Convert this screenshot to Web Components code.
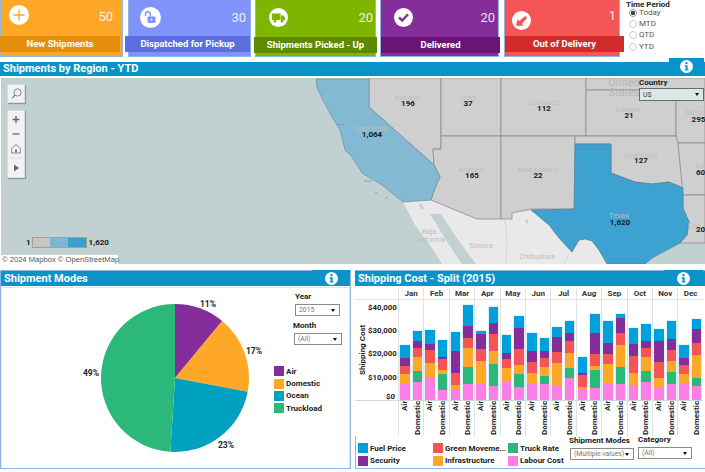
<!DOCTYPE html>
<html>
<head>
<meta charset="utf-8">
<title>Shipments dashboard</title>
<style>
  html, body { margin: 0; padding: 0; background: #fff; overflow: hidden; }
</style>
</head>
<body>
<app-root></app-root>
<script>
const FONT = 'Roboto, "Open Sans", "DejaVu Sans", sans-serif';

const ICONS = {
    plus: `<svg width="20" height="20" viewBox="0 0 20 20"><circle cx="10" cy="10" r="10" fill="#fff"/><path d="M10 4.5v11M4.5 10h11" stroke="#ffa726" stroke-width="1.4" fill="none"/></svg>`,
    unlock: `<svg width="21" height="21" viewBox="0 0 21 21"><circle cx="10.5" cy="10.5" r="10.5" fill="#fff"/><rect x="7.5" y="9.5" width="8" height="6.5" rx="1" fill="#7f93fb"/><path d="M5.5 9V7.2a2.4 2.4 0 0 1 4.8 0V9.5" stroke="#7f93fb" stroke-width="1.5" fill="none"/><rect x="10.8" y="11.8" width="1.5" height="1.8" fill="#fff"/></svg>`,
    truck: `<svg width="19" height="19" viewBox="0 0 19 19"><circle cx="9.5" cy="9.5" r="9.5" fill="#fff"/><rect x="3" y="5.5" width="8.5" height="6.5" fill="#7db500"/><path d="M12 7.5h2.2L16 9.6V12h-4z" fill="#7db500"/><circle cx="6" cy="13" r="1.5" fill="#7db500"/><circle cx="13" cy="13" r="1.5" fill="#7db500"/></svg>`,
    check: `<svg width="19" height="19" viewBox="0 0 19 19"><circle cx="9.5" cy="9.5" r="9.5" fill="#fff"/><path d="M5 9.5l3.2 3L14 6.3" stroke="#862d9c" stroke-width="2.4" fill="none"/></svg>`,
    out: `<svg width="19" height="19" viewBox="0 0 19 19"><circle cx="9.5" cy="9.5" r="9.5" fill="#fff"/><path d="M4.2 14.8l1-6.6 1.900 1.900 6.300-5.200 1.800 1.800-5.300 6.300 1.900 1.800z" fill="#f55555"/></svg>`
};

// ---- small pieces ----

class KpiCard extends HTMLElement {
    connectedCallback(){
        if(this.shadowRoot) return;
        const icon = ICONS[this.getAttribute('icon')];
        this.attachShadow({mode: 'open'}).innerHTML = `
<style>
  :host {
    display: block;
    box-sizing: border-box;
    height: 57px;
    background: var(--fill);
    border: 1px solid #8fb5e0;
    border-top: 0;
    font-family: ${FONT};
    color: #fff;
  }
  #top { display: flex; justify-content: space-between; height: var(--top, 36px); }
  #icon { margin: var(--icon-y) 0 0 var(--icon-x); line-height: 0; }
  #value { margin: var(--val-y) var(--val-x) 0 0; font-size: 13px; line-height: 16px; color: rgba(255,255,255,.88); }
  #banner {
    height: 16px;
    margin: 0 var(--ban-r) 0 var(--ban-l);
    background: var(--band);
    font-size: 9.5px;
    font-weight: 700;
    line-height: 16px;
    text-align: center;
    white-space: nowrap;
  }
</style>
<div id="top"><div id="icon">${icon}</div><div id="value">${this.getAttribute('value')}</div></div>
<div id="banner"><slot></slot></div>`;
    }
}
customElements.define('kpi-card', KpiCard);

class TimeFilter extends HTMLElement {
    connectedCallback(){
        if(this.shadowRoot) return;
        const items = ['Today', 'MTD', 'QTD', 'YTD'].map((t, i) => `
<div class="row"><span class="dot ${i === 0 ? 'on' : ''}"></span>${t}</div>`).join('');
        this.attachShadow({mode: 'open'}).innerHTML = `
<style>
  :host { display: block; margin-left: 6px; font-family: ${FONT}; font-size: 8px; color: #555; }
  #title { font-weight: 700; color: #222; line-height: 9px; height: 7px; white-space: nowrap; }
  .row { display: flex; align-items: center; height: 11.4px; padding-left: 3px; line-height: 10px; }
  .dot { box-sizing: border-box; width: 8px; height: 8px; margin-right: 2px; border: 1px solid #ccc; border-radius: 50%; background: #fff; }
  .dot.on { border-color: #999; background: radial-gradient(circle, #444 0 2px, #fff 2.4px); }
</style>
<div id="title">Time Period</div>${items}`;
    }
}
customElements.define('time-filter', TimeFilter);

class PanelHeader extends HTMLElement {
    connectedCallback(){
        if(this.shadowRoot) return;
        this.attachShadow({mode: 'open'}).innerHTML = `
<style>
  :host {
    display: block;
    position: relative;
    height: var(--head-h, 14px);
    background: #0a93c9;
    color: #fff;
    font-family: ${FONT};
    font-size: 11px;
    font-weight: 700;
    line-height: var(--head-h, 14px);
    padding-left: 3px;
    white-space: nowrap;
  }
  #tab {
    position: absolute;
    top: var(--tab-top, -4px);
    right: var(--tab-right, 1px);
    bottom: 0;
    width: var(--tab-w, 35px);
    background: #0a93c9;
    display: flex;
    align-items: flex-end;
    justify-content: center;
    padding-bottom: var(--tab-pad, 1px);
    box-sizing: border-box;
  }
</style>
<slot></slot>
<div id="tab"><svg width="13" height="13" viewBox="0 0 13 13"><circle cx="6.5" cy="6.5" r="6.5" fill="#fff"/><rect x="5.4" y="2.2" width="2.2" height="2" fill="#0a93c9"/><path d="M4.600 5.300h3v4.100h1v1.100H4.600V9.400h1V6.400h-1z" fill="#0a93c9"/></svg></div>`;
    }
}
customElements.define('panel-header', PanelHeader);

class FilterSelect extends HTMLElement {
    connectedCallback(){
        if(this.shadowRoot) return;
        this.attachShadow({mode: 'open'}).innerHTML = `
<style>
  :host { display: block; font-family: ${FONT}; }
  #label { font-size: 8px; font-weight: 700; color: #222; line-height: 10px; height: 10px; margin-left: var(--label-x, 0); white-space: nowrap; }
  #box {
    box-sizing: border-box;
    display: flex;
    align-items: center;
    justify-content: space-between;
    width: var(--w, 45px);
    height: var(--h, 12px);
    margin-top: var(--gap, 2px);
    margin-left: var(--box-x, 0);
    padding: 0 4px 0 3px;
    border: 1px solid var(--edge, #8a8a8a);
    background: var(--bg, #fff);
    color: var(--text, #777);
    font-size: 6.8px;
    white-space: nowrap;
  }
  #arrow { width: 0; height: 0; border: 2.5px solid transparent; border-top: 3px solid #111; border-bottom: 0; }
</style>
<div id="label">${this.getAttribute('label')}</div>
<div id="box"><span>${this.getAttribute('value')}</span><span id="arrow"></span></div>`;
    }
}
customElements.define('filter-select', FilterSelect);

class ColorKey extends HTMLElement {
    connectedCallback(){
        if(this.shadowRoot) return;
        this.attachShadow({mode: 'open'}).innerHTML = `
<style>
  :host { display: flex; align-items: center; font-family: ${FONT}; font-size: 8px; font-weight: 700; color: #222; white-space: nowrap; height: var(--row, 12.5px); }
  i { width: 10px; height: 10px; margin-right: 2px; background: ${this.getAttribute('color')}; flex: none; }
</style>
<i></i><slot></slot>`;
    }
}
customElements.define('color-key', ColorKey);

// ---- map ----

const STATE_PATHS = [
    // nevada, utah, colorado, top band, kansas
    'M369 78H441V149H433L434 165L369 107Z',
    'M441 78H501V136H441Z',
    'M501 78H586V136H501Z',
    'M586 78H705V90H586Z',
    'M586 90H676V136H586Z',
    'M676 90H705V143H676Z',
    // arizona, new mexico
    'M441 136H501V219H477L431 200L435 188L440 177L434 165L433 149H441Z',
    'M501 136H575V209H531L512 213V219H501Z',
    // oklahoma, arkansas, louisiana
    'M575 136H676L678 143L683 188L669 182L652 184L635 182L619 176L611 173V144H575Z',
    'M678 143H705V195H683Z',
    'M683 195H705V243L680 243L687 235L689 222L683 208Z'
];
const CALIFORNIA = 'M316 79H369V107L434 165L440 177L435 188L431 200L403 202L382 185L362 173L352 157L345 150L340 130L332 117L323 100L317 88Z';
const TEXAS = 'M575 144H611V173L619 176L635 182L652 184L669 182L683 188V208L689 222L687 235L680 243L652 258L645 264H607L599 250L592 241L585 239L579 240L572 252L559 238L549 225L531 210L574 209Z';
const MEXICO = 'M403 202L431 200L477 219H512V213L531 210L549 225L559 238L572 252L579 240L585 239L592 241L599 250L607 264H442L432 248L415 225Z';
const GULF = 'M430 214L441 214L458 240L476 264H462L446 240Z';

// the right edge of the map cuts these three names in the reference
const PALE = [
    ['Nevada',407,100], ['Utah',468,100], ['Colorado',544,105], ['Kansas',628,112], ['California',371,131],
    ['Arizona',471,172], ['New Mexico',538,172], ['Oklahoma',640,158], ['Misso',696,115], ['Ark',700,169],
    ['Texas',619,218], ['Lou',694,228], ['Baja',429,234], ['California',429,242], ['Sonora',481,248], ['Chihuahua',537,259]
];
const COUNTS = [
    ['196',408,106], ['37',468,106], ['112',544,111], ['21',629,118], ['1,064',372,137], ['165',472,178],
    ['22',538,178], ['127',641,163], ['295',698.500,122], ['60',700.500,175], ['20',700.500,232], ['1,620',620,225]
];

class RegionMap extends HTMLElement {
    connectedCallback(){
        if(this.shadowRoot) return;
        const pale = PALE.map(p => `<text x="${p[1]}" y="${p[2]}" class="pale">${p[0]}</text>`).join('');
        const counts = COUNTS.map(p => `<text x="${p[1]}" y="${p[2]}" class="count">${p[0]}</text>`).join('');
        this.attachShadow({mode: 'open'}).innerHTML = `
<style>
  :host { display: block; position: relative; height: 186px; margin-left: 1px; overflow: hidden; background: #c1d1d1; font-family: ${FONT}; }
  svg#map { display: block; position: absolute; left: -1px; top: 0; }
  .pale { font-size: 7.5px; fill: #bcbfbf; text-anchor: middle; }
  .count { font-size: 8px; font-weight: 700; fill: #1a1a1a; text-anchor: middle; }
  .big { font-size: 11px; fill: #b4b8b8; text-anchor: middle; }
  .tool {
    position: absolute;
    left: 6px;
    box-sizing: border-box;
    width: 18px;
    background: #f1f3f2;
    border: 1px solid #d9dcdb;
    box-shadow: 1px 1px 1px rgba(0,0,0,.25);
    display: flex;
    flex-direction: column;
    align-items: center;
  }
  #search { top: 6px; height: 19px; justify-content: center; }
  #zoom { top: 32px; height: 68px; }
  #zoom svg { display: block; }
  #scale { position: absolute; left: 25px; top: 159px; display: flex; align-items: center; font-size: 8px; font-weight: 700; color: #1a1a1a; }
  #ramp { display: flex; box-sizing: border-box; width: 55px; height: 11px; margin: 0 2px 0 1px; border: 1px solid #a89f8f; }
  #ramp i { flex: 1; }
  #credit { position: absolute; left: 0; bottom: 0; width: 117px; height: 9px; background: #fff; font-family: "Liberation Sans", sans-serif; font-size: 7.600px; line-height: 9px; color: #555; padding-left: 1px; white-space: nowrap; box-sizing: border-box; }
  #country { position: absolute; right: 1px; top: 0; --w: 65px; --h: 13px; --gap: 0px; --edge: #5f6f70; --bg: #dce6e6; --text: #333; }
</style>
<svg id="map" width="705" height="186" viewBox="0 78 705 186">
  <path d="${MEXICO}" fill="#e9e9e9"/>
  <path d="${GULF}" fill="#c1d1d1"/>
  <path d="M505 220L507 240L506 264M569 253L564 264" fill="none" stroke="#bbb" stroke-width=".7" stroke-dasharray="1.500 1"/>
  <path d="M420 204l3 5M526 220l2 3" stroke="#c1d1d1" stroke-width="2.500" fill="none"/>
  ${STATE_PATHS.map(d => `<path d="${d}" fill="#cfcfcf" stroke="#8e8e8e" stroke-width=".8"/>`).join('')}
  <path d="${CALIFORNIA}" fill="#83b9d2" stroke="#6f8f9f" stroke-width=".7"/>
  <path d="${TEXAS}" fill="#3da2d1" stroke="#5a7f92" stroke-width=".7"/>
  <path d="M364 181h8M375 192l2 1M386 197l1 2M338 124l6 1" stroke="#7d9298" stroke-width=".8" fill="none"/>
  ${pale}
  <text x="624" y="86" class="big">United</text>
  <text x="624" y="96" class="big">States</text>
  ${counts}
</svg>
<div class="tool" id="search"><svg width="13" height="13" viewBox="0 0 13 13"><circle cx="7.500" cy="5.500" r="3.600" fill="none" stroke="#777" stroke-width=".9"/><path d="M5 8.200L2.200 11.200" stroke="#777" stroke-width="1.100"/></svg></div>
<div class="tool" id="zoom"><svg width="16" height="66" viewBox="0 0 16 66">
  <path d="M8 5v7M4.500 8.500h7" stroke="#666" stroke-width="1.400"/>
  <path d="M4.500 23h7" stroke="#666" stroke-width="1.300"/>
  <path d="M3.500 37.500L8 33.500l4.500 4v4.500h-9z" fill="none" stroke="#777" stroke-width=".8"/><rect x="7" y="38.500" width="2" height="3" fill="#777"/>
  <path d="M1.500 47h13" stroke="#d5d5d5" stroke-width=".8"/>
  <path d="M6 53.500l5 3.500l-5 3.500z" fill="#666"/>
</svg></div>
<div id="scale">1<div id="ramp"><i style="background:#c6c6c6"></i><i style="background:#7fb6cf"></i><i style="background:#3aa0cd"></i></div>1,620</div>
<div id="credit">© 2024 Mapbox © OpenStreetMap</div>
<filter-select id="country" label="Country" value="US"></filter-select>`;
    }
}
customElements.define('region-map', RegionMap);

// ---- pie panel ----

const MODES = [
    {name: 'Air', share: 11, color: '#862d9c', lx: 208, ly: 307},
    {name: 'Domestic', share: 17, color: '#ffa726', lx: 254, ly: 354},
    {name: 'Ocean', share: 23, color: '#00a0bf', lx: 226, ly: 448},
    {name: 'Truckload', share: 49, color: '#2cb87a', lx: 91, ly: 376}
];

const slicePath = (cx, cy, r, from, to) => {
    const a = from * Math.PI * 2 / 100;
    const b = to * Math.PI * 2 / 100;
    const large = (to - from) > 50 ? 1 : 0;
    return `M${cx} ${cy}L${cx + r * Math.sin(a)} ${cy - r * Math.cos(a)}A${r} ${r} 0 ${large} 1 ${cx + r * Math.sin(b)} ${cy - r * Math.cos(b)}Z`;
};

class ModesPanel extends HTMLElement {
    connectedCallback(){
        if(this.shadowRoot) return;
        let total = 0;
        const slices = MODES.map(m => {
            const d = slicePath(175, 378, 74, total, total + m.share);
            total += m.share;
            return `<path d="${d}" fill="${m.color}"/><text x="${m.lx}" y="${m.ly}">${m.share}%</text>`;
        }).join('');
        const keys = MODES.map(m => `<color-key color="${m.color}">${m.name}</color-key>`).join('');
        this.attachShadow({mode: 'open'}).innerHTML = `
<style>
  :host { display: block; box-sizing: border-box; width: 351px; height: 199px; border: 1px solid #8fb5e0; font-family: ${FONT}; --head-h: 15px; --tab-w: 38px; --tab-right: 0px; --tab-top: -1px; }
  #inner { display: flex; height: 181px; margin-top: 1px; border: 1px solid #e4e4e4; border-bottom: 0; box-sizing: border-box; }
  svg { display: block; flex: none; }
  text { font-size: 8.5px; font-weight: 700; fill: #222; text-anchor: middle; }
  #side { display: flex; flex-direction: column; padding-top: 4px; }
  #year { margin: 0 0 5px 21px; }
  #month { margin-left: 19px; --w: 48px; --box-x: 1px; }
  #keys { margin-top: 20px; --row: 12.4px; }
</style>
<panel-header>Shipment Modes</panel-header>
<div id="inner">
  <svg width="272" height="180" viewBox="2 288 272 180">${slices}</svg>
  <div id="side">
    <filter-select id="year" label="Year" value="2015"></filter-select>
    <filter-select id="month" label="Month" value="(All)"></filter-select>
    <div id="keys">${keys}</div>
  </div>
</div>`;
    }
}
customElements.define('modes-panel', ModesPanel);

// ---- stacked bars ----

// zoom-measured segment tops, bottom to top: labour, truck, infrastructure, green, security, fuel.
// a null truck means the bar has no truck segment (all Air bars)
const MONTHS = [
    ['Jan', [358,null,328,302,279,240], [350,317,276,248,229,197]],
    ['Feb', [340,null,295,256,236,195], [375,327,316,282,275,226]],
    ['Mar', [372,null,360,323,258,202], [357,307,248,219,182,120]],
    ['Apr', [358,null,287,252,207,197], [363,297,259,208,173,126]],
    ['May', [352,null,310,282,263,210], [367,328,299,252,188,152]],
    ['Jun', [358,null,323,290,257,205], [357,333,306,278,258,218]],
    ['Jul', [364,null,293,260,217,186], [339,309,265,228,205,167]],
    ['Aug', [376,null,366,331,325,277], [370,314,304,267,203,146]],
    ['Sep', [358,null,297,268,233,169], [357,307,239,203,158,148]],
    ['Oct', [364,null,323,273,238,190], [350,317,276,248,229,176]],
    ['Nov', [368,null,339,292,228,192], [357,320,288,254,221,169]],
    ['Dec', [358,null,328,301,278,240], [364,339,271,235,192,162]]
];
const SEGMENTS = ['#ff7ee6', '#2cb87a', '#ffa726', '#f55555', '#862d9c', '#00a0dd'];

const barMarkup = (tops) => {
    let prev = 405;
    const parts = tops.map((top, i) => {
        if(top === null) return '';
        const h = (prev - top) / 3;
        prev = top;
        return `<i style="height:${h.toFixed(2)}px;background:${SEGMENTS[i]}"></i>`;
    }).join('');
    return `<div class="bar">${parts}</div>`;
};

class CostPanel extends HTMLElement {
    connectedCallback(){
        if(this.shadowRoot) return;
        const cols = MONTHS.map(m => `
<div class="col">
  <div class="mon">${m[0]}</div>
  <div class="plot">${barMarkup(m[1])}${barMarkup(m[2])}</div>
  <div class="cats"><span>Air</span><span>Domestic</span></div>
</div>`).join('');
        const ticks = ['$40,000', '$30,000', '$20,000', '$10,000', '$0'].map(t => `<div class="tick">${t}</div>`).join('');
        this.attachShadow({mode: 'open'}).innerHTML = `
<style>
  :host { display: block; box-sizing: border-box; width: 350px; height: 199px; border-top: 1px solid #8fb5e0; border-bottom: 1px solid #8fb5e0; font-family: ${FONT}; --head-h: 15px; --tab-w: 39px; --tab-right: 2px; --tab-top: -1px; }
  #chart { display: flex; margin-top: 2px; height: 148px; }
  #yaxis { width: 43px; flex: none; }
  #ycorner { height: 12px; border-bottom: 1px solid #e2e2e2; box-sizing: border-box; }
  #yplot { display: flex; height: 101px; box-sizing: border-box; border-bottom: 1px solid #d8d8d8; }
  #ytitle { writing-mode: vertical-rl; transform: rotate(180deg); width: 10px; margin-left: 3px; font-size: 8px; font-weight: 700; color: #222; text-align: center; line-height: 10px; white-space: nowrap; }
  #ticks { padding-top: 2px; width: 27px; }
  .tick { height: 23.2px; line-height: 12px; font-size: 7.8px; font-weight: 700; color: #222; text-align: right; white-space: nowrap; }
  .tick:last-child { margin-top: -4px; }
  #months { display: grid; grid-template-columns: repeat(12, 25.420px); }
  .col { border-left: 1px solid #e2e2e2; box-sizing: border-box; }
  .mon { box-sizing: border-box; height: 12px; border-bottom: 1px solid #e2e2e2; font-size: 8px; font-weight: 700; color: #333; line-height: 11px; text-align: center; }
  .plot { box-sizing: border-box; display: flex; align-items: flex-end; gap: 3px; height: 101px; padding-left: 1px; border-bottom: 1px solid #d8d8d8; }
  .bar { display: flex; flex-direction: column-reverse; width: 9.5px; box-shadow: 0 0 0 .5px rgba(170,215,240,.7); }
  .bar i { display: block; }
  .cats { display: flex; gap: 3px; height: 35px; padding-left: 1px; overflow: hidden; }
  .cats span { writing-mode: vertical-rl; transform: rotate(180deg); width: 9.5px; height: 34px; font-size: 8px; font-weight: 700; color: #222; line-height: 9.5px; text-align: right; white-space: nowrap; }
  #foot { display: flex; height: 32px; box-sizing: border-box; border-left: 1px solid #8fb5e0; padding-left: 2px; }
  #keys { display: grid; grid-template-columns: repeat(3, 75px); grid-auto-rows: 12.5px; width: 211px; padding-top: 6px; box-sizing: border-box; }
  #modes { --w: 64px; --h: 12px; --box-x: 1px; }
  #cat { --w: 54px; --h: 12px; --gap: 2px; margin: -1px 0 0 4px; }
</style>
<panel-header>Shipping Cost - Split (2015)</panel-header>
<div id="chart">
  <div id="yaxis">
    <div id="ycorner"></div>
    <div id="yplot"><div id="ytitle">Shipping Cost</div><div id="ticks">${ticks}</div></div>
  </div>
  <div id="months">${cols}</div>
</div>
<div id="foot">
  <div id="keys">
    <color-key color="#00a0dd">Fuel Price</color-key>
    <color-key color="#f55555">Green Moveme...</color-key>
    <color-key color="#2cb87a">Truck Rate</color-key>
    <color-key color="#862d9c">Security</color-key>
    <color-key color="#ffa726">Infrastructure</color-key>
    <color-key color="#ff7ee6">Labour Cost</color-key>
  </div>
  <filter-select id="modes" label="Shipment Modes" value="(Multiple values)"></filter-select>
  <filter-select id="cat" label="Category" value="(All)"></filter-select>
</div>`;
    }
}
customElements.define('cost-panel', CostPanel);

// ---- page ----

class AppRoot extends HTMLElement {
    constructor(){
        super();
        this.attachShadow({mode: 'open'}).innerHTML = `
<style>
  :host { display: block; width: 705px; height: 472px; overflow: hidden; background: #fff; }
  #cards { display: flex; height: 57px; margin-bottom: 5px; }
  kpi-card:nth-child(1) { width: 123px; --fill: #ffa726; --band: #e58e0c; --icon-x: 8px; --icon-y: 5px; --val-x: 9px; --val-y: 9px; --ban-l: -1px; --ban-r: 2px; }
  kpi-card:nth-child(2) { width: 123px; margin-left: 5px; --fill: #7f93fb; --band: #5a6ee0; --icon-x: 11px; --icon-y: 7px; --val-x: 4px; --val-y: 10px; --ban-l: -4px; --ban-r: 0px; }
  kpi-card:nth-child(3) { width: 121px; margin-left: 4px; --fill: #7db500; --band: #5e8a00; --top: 37px; --icon-x: 13px; --icon-y: 8px; --val-x: 2px; --val-y: 10px; --ban-l: -2px; --ban-r: -2px; }
  kpi-card:nth-child(4) { width: 119px; margin-left: 4px; --fill: #862d9c; --band: #6b1478; --top: 37px; --icon-x: 13px; --icon-y: 8px; --val-x: 3px; --val-y: 10px; --ban-l: 0px; --ban-r: -2px; }
  kpi-card:nth-child(5) { width: 116px; margin-left: 5px; --fill: #f55555; --band: #d32b2b; --icon-x: 7px; --icon-y: 11px; --val-x: 3px; --val-y: 8px; --ban-l: 0px; --ban-r: -5px; }
  panel-header { --tab-pad: 3px; }
  region-map { margin-top: 2px; }
  #bottom { display: flex; gap: 4px; margin-top: 6px; --tab-pad: 1px; }
</style>
<div id="cards">
  <kpi-card icon="plus" value="50">New Shipments</kpi-card>
  <kpi-card icon="unlock" value="30">Dispatched for Pickup</kpi-card>
  <kpi-card icon="truck" value="20">Shipments Picked - Up</kpi-card>
  <kpi-card icon="check" value="20">Delivered</kpi-card>
  <kpi-card icon="out" value="1">Out of Delivery</kpi-card>
  <time-filter></time-filter>
</div>
<panel-header>Shipments by Region - YTD</panel-header>
<region-map></region-map>
<div id="bottom">
  <modes-panel></modes-panel>
  <cost-panel></cost-panel>
</div>`;
    }
}
customElements.define('app-root', AppRoot);
</script>
</body>
</html>
